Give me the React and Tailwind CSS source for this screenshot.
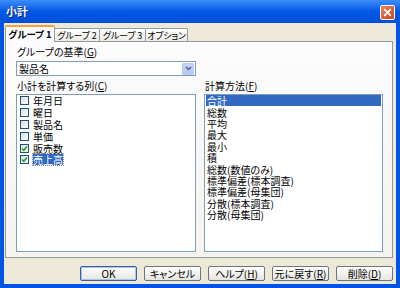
import React from "react";

const F = { fontFamily: '"Noto Sans CJK JP", "Noto Sans", sans-serif' };

function Check({ checked }) {
  return (
    <span className="w-[9px] h-[9px] border border-[#1C5180] bg-gradient-to-br from-[#DCDCD7] to-white flex items-center justify-center shrink-0">
      {checked && (
        <svg width="7" height="7" viewBox="0 0 7 7">
          <path d="M1 3.5 L2.8 5.3 L6 1.5" stroke="#21A121" strokeWidth="1.6" fill="none" />
        </svg>
      )}
    </span>
  );
}

function Btn({ children, def }) {
  return (
    <div
      className={
        "w-[57px] h-[15px] rounded-[2px] border flex items-center justify-center text-[10px] leading-none whitespace-nowrap bg-gradient-to-b from-white to-[#E6E5DE] " +
        (def ? "border-[#3D5E97] shadow-[inset_0_0_0_1px_#A8C6F4]" : "border-[#6E7580]")
      }
    >
      {children}
    </div>
  );
}

export default function App() {
  const cols = [
    ["年月日", false],
    ["曜日", false],
    ["製品名", false],
    ["単価", false],
    ["販売数", true],
    ["売上高", true],
  ];
  const methods = [
    "合計",
    "総数",
    "平均",
    "最大",
    "最小",
    "積",
    "総数(数値のみ)",
    "標準偏差(標本調査)",
    "標準偏差(母集団)",
    "分散(標本調査)",
    "分散(母集団)",
  ];
  return (
    <div style={F} className="w-[400px] h-[288px] flex flex-col bg-[#0054E3] text-black overflow-hidden [font-feature-settings:'palt']">
      <div className="h-[23px] shrink-0 flex items-center justify-between pl-[6px] pr-[5px] bg-gradient-to-b from-[#3C8CF8] via-[#0058E6] to-[#0050D8]">
        <span className="text-white font-bold text-[11px] leading-none [text-shadow:1px_1px_0_#0A1E78]">小計</span>
        <div className="w-[15px] h-[15px] mt-[1px] rounded-[2px] border border-white bg-gradient-to-br from-[#E9835F] to-[#C9451D] flex items-center justify-center">
          <svg width="9" height="9" viewBox="0 0 9 9">
            <path d="M1.2 1.2 L7.8 7.8 M7.8 1.2 L1.2 7.8" stroke="white" strokeWidth="1.7" />
          </svg>
        </div>
      </div>
      <div className="flex-1 mx-[4px] mb-[4px] bg-[#ECE9D8] flex flex-col">
        <div className="h-[18px] shrink-0 flex items-end pl-[1px] relative z-10">
          <div className="w-[50px] h-[17px] -mb-[1px] bg-[#FCFCFE] border border-b-0 border-[#919B9C] border-t-[2px] border-t-[#F2A33B] rounded-t-[2px] flex items-center justify-center text-[9.5px] font-bold leading-none whitespace-nowrap">
            グループ 1
          </div>
          {[
            ["グループ 2", "w-[45px]"],
            ["グループ 3", "w-[46px]"],
            ["オプション", "w-[42px]"],
          ].map(([t, w]) => (
            <div
              key={t}
              className={
                w +
                " h-[13px] bg-gradient-to-b from-white to-[#ECEBE6] border border-b-0 border-l-0 border-[#919B9C] rounded-tr-[2px] flex items-center justify-center text-[9px] leading-none whitespace-nowrap tracking-[-0.2px]"
              }
            >
              {t}
            </div>
          ))}
        </div>
        <div className="ml-[1px] mr-[3px] h-[217px] shrink-0 border border-[#919B9C] bg-gradient-to-b from-[#FCFCFE] to-[#F4F3EE] pt-[4px] pl-[10px] pr-[9px] flex flex-col">
          <div className="h-[12px] text-[10px] leading-[12px] pl-[1px] whitespace-nowrap">
            グループの基準(<span className="underline">G</span>)
          </div>
          <div className="mt-[3px] w-[180px] h-[15px] border border-[#7F9DB9] bg-white flex items-center">
            <span className="flex-1 text-[10px] leading-none pl-[2px]">製品名</span>
            <div className="w-[12px] h-[12px] mr-[1px] rounded-[1px] bg-gradient-to-b from-[#C6D3F7] to-[#B4C8F5] border border-[#B9CBF3] flex items-center justify-center">
              <svg width="7" height="5" viewBox="0 0 7 5">
                <path d="M1 1 L3.5 3.5 L6 1" stroke="#4D6185" strokeWidth="1.5" fill="none" />
              </svg>
            </div>
          </div>
          <div className="mt-[4px] flex gap-[8px]">
            <div className="w-[180px] flex flex-col">
              <div className="h-[12px] text-[10px] leading-[12px] pl-[1px] whitespace-nowrap">
                小計を計算する列(<span className="underline">C</span>)
              </div>
              <div className="mt-[2px] h-[158px] border border-[#7F9DB9] bg-white pl-[3px] flex flex-col">
                {cols.map(([t, c], i) => (
                  <div key={t} className="h-[11.8px] shrink-0 flex items-center gap-[4px]">
                    <Check checked={c} />
                    <span
                      className={
                        "text-[10px] leading-[11px] whitespace-nowrap " +
                        (i === 5 ? "bg-[#316AC5] text-white outline outline-1 outline-dotted outline-[#8A8A8A]" : "")
                      }
                    >
                      {t}
                    </span>
                  </div>
                ))}
              </div>
            </div>
            <div className="w-[179px] flex flex-col">
              <div className="h-[12px] text-[10px] leading-[12px] pl-[1px] whitespace-nowrap">
                計算方法(<span className="underline">F</span>)
              </div>
              <div className="mt-[2px] h-[158px] border border-[#7F9DB9] bg-white px-[1px] flex flex-col">
                {methods.map((t, i) => (
                  <div
                    key={t}
                    className={
                      "h-[11.4px] shrink-0 flex items-center pl-[1px] text-[10px] leading-[11px] whitespace-nowrap " +
                      (i === 0 ? "bg-[#316AC5] text-white" : "")
                    }
                  >
                    {t}
                  </div>
                ))}
              </div>
            </div>
          </div>
        </div>
        <div className="flex justify-end gap-[7px] mr-[3px] mt-[8px]">
          <Btn def>OK</Btn>
          <Btn>キャンセル</Btn>
          <Btn>
            ヘルプ(<span className="underline">H</span>)
          </Btn>
          <Btn>
            元に戻す(<span className="underline">R</span>)
          </Btn>
          <Btn>
            削除(<span className="underline">D</span>)
          </Btn>
        </div>
      </div>
    </div>
  );
}
